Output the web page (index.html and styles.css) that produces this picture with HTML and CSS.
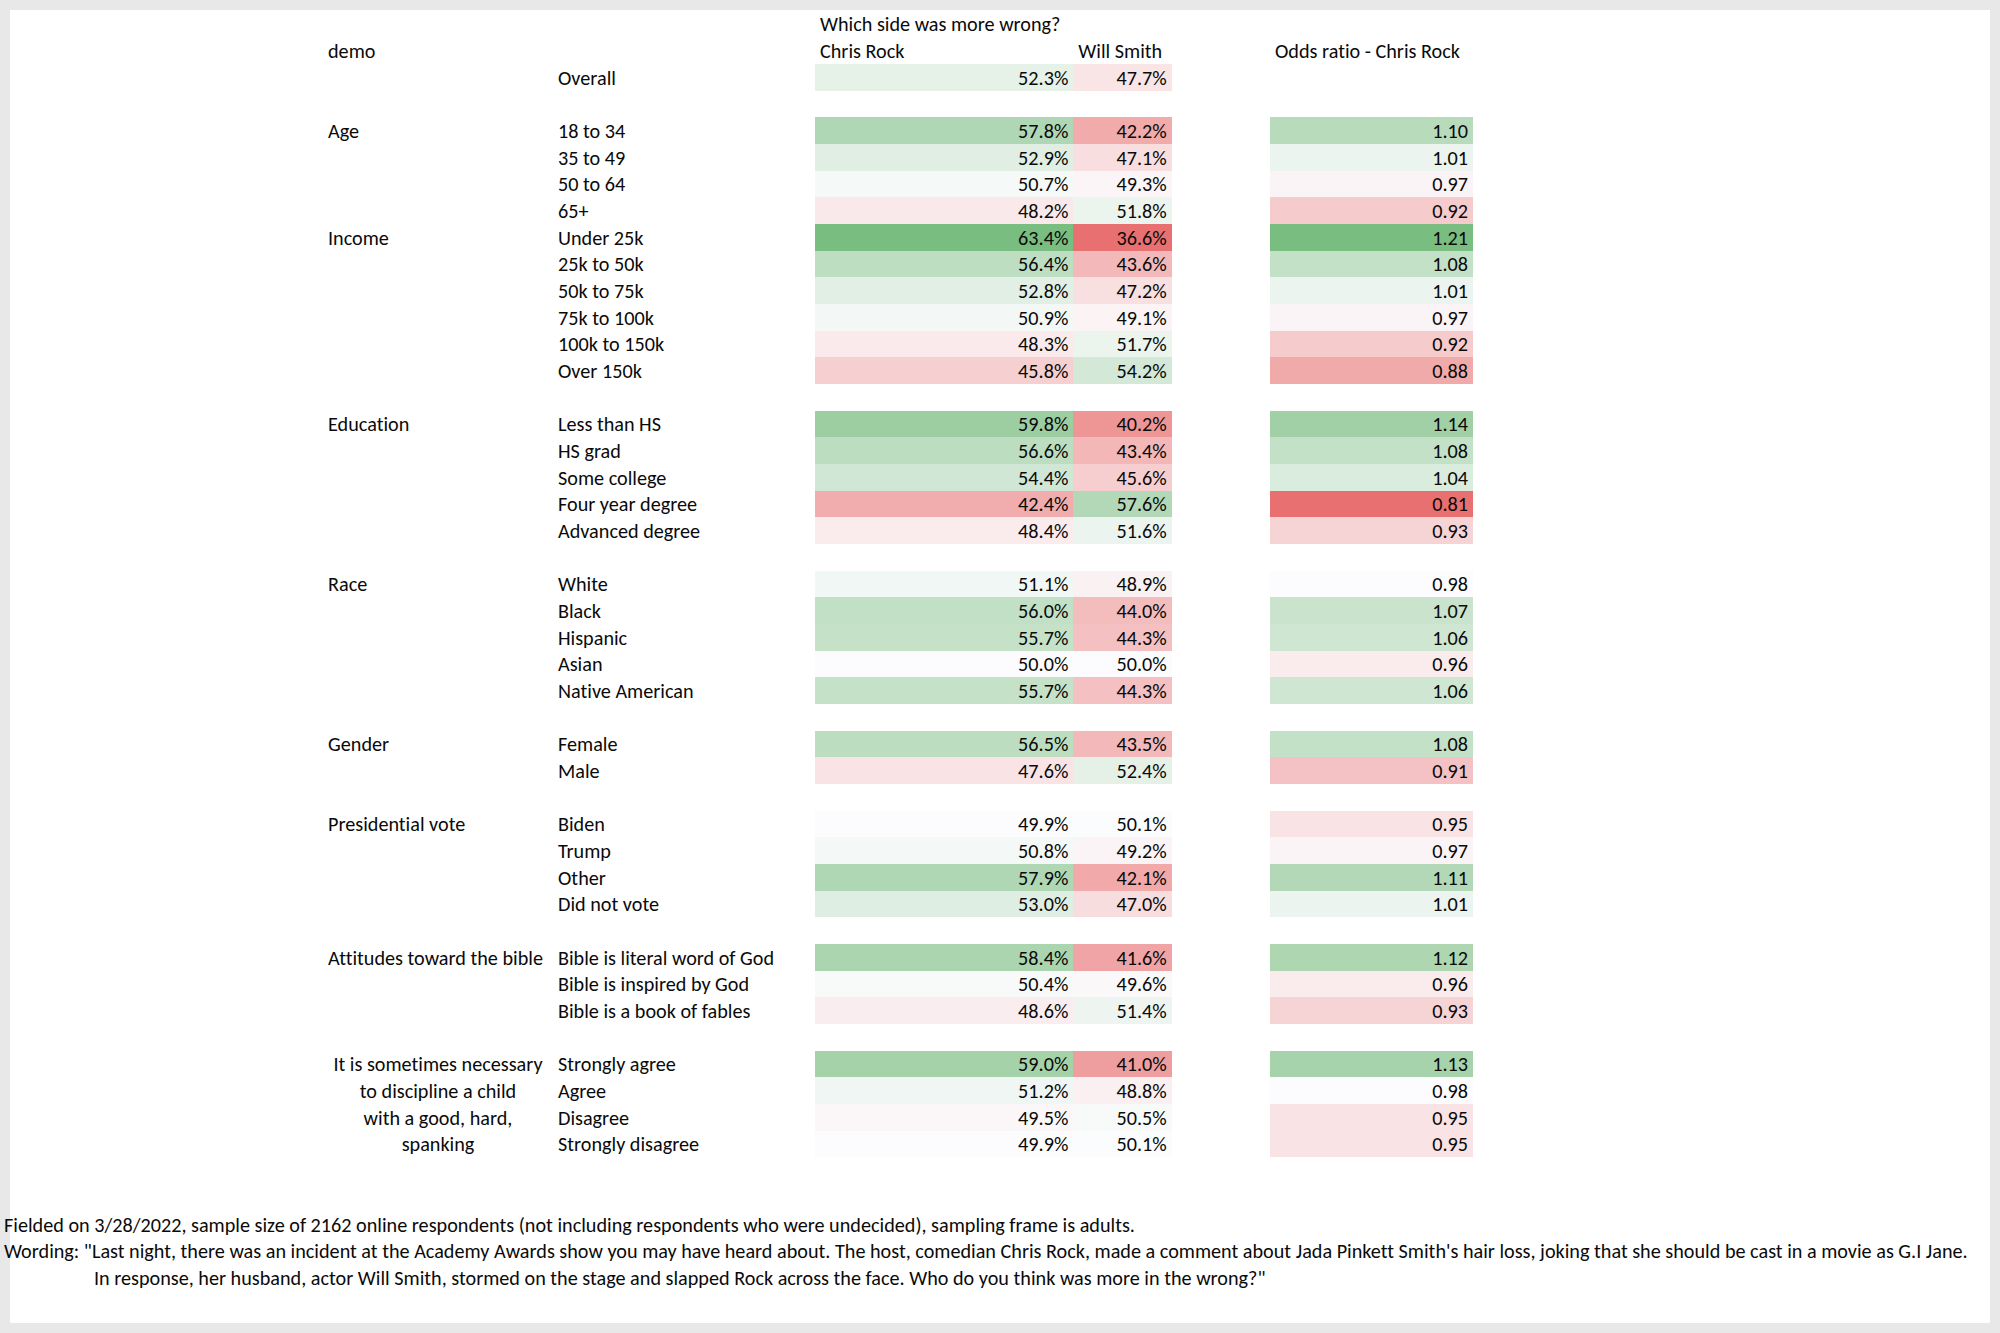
FILE: index.html
```html
<!DOCTYPE html>
<html lang="en">
<head>
<meta charset="utf-8">
<title>Which side was more wrong?</title>
<link rel="stylesheet" href="styles.css">
</head>
<body>
<div class="sheet">
  <table class="grid">
    <colgroup>
      <col class="c-a"><col class="c-b"><col class="c-c"><col class="c-d"><col class="c-e"><col class="c-f"><col class="c-g">
    </colgroup>
    <tr><td></td><td></td><td></td><td class="ov">Which side was more wrong?</td><td></td><td></td><td></td></tr>
    <tr><td></td><td>demo</td><td></td><td>Chris Rock</td><td>Will Smith</td><td></td><td>Odds ratio - Chris Rock</td></tr>
    <tr><td></td><td></td><td>Overall</td><td class="p">52.3%</td><td class="p">47.7%</td><td></td><td></td></tr>
    <tr class="blank"><td colspan="7"></td></tr>
    <tr><td></td><td>Age</td><td>18 to 34</td><td class="p">57.8%</td><td class="p">42.2%</td><td></td><td class="o">1.10</td></tr>
    <tr><td></td><td></td><td>35 to 49</td><td class="p">52.9%</td><td class="p">47.1%</td><td></td><td class="o">1.01</td></tr>
    <tr><td></td><td></td><td>50 to 64</td><td class="p">50.7%</td><td class="p">49.3%</td><td></td><td class="o">0.97</td></tr>
    <tr><td></td><td></td><td>65+</td><td class="p">48.2%</td><td class="p">51.8%</td><td></td><td class="o">0.92</td></tr>
    <tr><td></td><td>Income</td><td>Under 25k</td><td class="p">63.4%</td><td class="p">36.6%</td><td></td><td class="o">1.21</td></tr>
    <tr><td></td><td></td><td>25k to 50k</td><td class="p">56.4%</td><td class="p">43.6%</td><td></td><td class="o">1.08</td></tr>
    <tr><td></td><td></td><td>50k to 75k</td><td class="p">52.8%</td><td class="p">47.2%</td><td></td><td class="o">1.01</td></tr>
    <tr><td></td><td></td><td>75k to 100k</td><td class="p">50.9%</td><td class="p">49.1%</td><td></td><td class="o">0.97</td></tr>
    <tr><td></td><td></td><td>100k to 150k</td><td class="p">48.3%</td><td class="p">51.7%</td><td></td><td class="o">0.92</td></tr>
    <tr><td></td><td></td><td>Over 150k</td><td class="p">45.8%</td><td class="p">54.2%</td><td></td><td class="o">0.88</td></tr>
    <tr class="blank"><td colspan="7"></td></tr>
    <tr><td></td><td>Education</td><td>Less than HS</td><td class="p">59.8%</td><td class="p">40.2%</td><td></td><td class="o">1.14</td></tr>
    <tr><td></td><td></td><td>HS grad</td><td class="p">56.6%</td><td class="p">43.4%</td><td></td><td class="o">1.08</td></tr>
    <tr><td></td><td></td><td>Some college</td><td class="p">54.4%</td><td class="p">45.6%</td><td></td><td class="o">1.04</td></tr>
    <tr><td></td><td></td><td>Four year degree</td><td class="p">42.4%</td><td class="p">57.6%</td><td></td><td class="o">0.81</td></tr>
    <tr><td></td><td></td><td>Advanced degree</td><td class="p">48.4%</td><td class="p">51.6%</td><td></td><td class="o">0.93</td></tr>
    <tr class="blank"><td colspan="7"></td></tr>
    <tr><td></td><td>Race</td><td>White</td><td class="p">51.1%</td><td class="p">48.9%</td><td></td><td class="o">0.98</td></tr>
    <tr><td></td><td></td><td>Black</td><td class="p">56.0%</td><td class="p">44.0%</td><td></td><td class="o">1.07</td></tr>
    <tr><td></td><td></td><td>Hispanic</td><td class="p">55.7%</td><td class="p">44.3%</td><td></td><td class="o">1.06</td></tr>
    <tr><td></td><td></td><td>Asian</td><td class="p">50.0%</td><td class="p">50.0%</td><td></td><td class="o">0.96</td></tr>
    <tr><td></td><td></td><td>Native American</td><td class="p">55.7%</td><td class="p">44.3%</td><td></td><td class="o">1.06</td></tr>
    <tr class="blank"><td colspan="7"></td></tr>
    <tr><td></td><td>Gender</td><td>Female</td><td class="p">56.5%</td><td class="p">43.5%</td><td></td><td class="o">1.08</td></tr>
    <tr><td></td><td></td><td>Male</td><td class="p">47.6%</td><td class="p">52.4%</td><td></td><td class="o">0.91</td></tr>
    <tr class="blank"><td colspan="7"></td></tr>
    <tr><td></td><td>Presidential vote</td><td>Biden</td><td class="p">49.9%</td><td class="p">50.1%</td><td></td><td class="o">0.95</td></tr>
    <tr><td></td><td></td><td>Trump</td><td class="p">50.8%</td><td class="p">49.2%</td><td></td><td class="o">0.97</td></tr>
    <tr><td></td><td></td><td>Other</td><td class="p">57.9%</td><td class="p">42.1%</td><td></td><td class="o">1.11</td></tr>
    <tr><td></td><td></td><td>Did not vote</td><td class="p">53.0%</td><td class="p">47.0%</td><td></td><td class="o">1.01</td></tr>
    <tr class="blank"><td colspan="7"></td></tr>
    <tr><td></td><td>Attitudes toward the bible</td><td>Bible is literal word of God</td><td class="p">58.4%</td><td class="p">41.6%</td><td></td><td class="o">1.12</td></tr>
    <tr><td></td><td></td><td>Bible is inspired by God</td><td class="p">50.4%</td><td class="p">49.6%</td><td></td><td class="o">0.96</td></tr>
    <tr><td></td><td></td><td>Bible is a book of fables</td><td class="p">48.6%</td><td class="p">51.4%</td><td></td><td class="o">0.93</td></tr>
    <tr class="blank"><td colspan="7"></td></tr>
    <tr><td></td><td class="ctr">It is sometimes necessary</td><td>Strongly agree</td><td class="p">59.0%</td><td class="p">41.0%</td><td></td><td class="o">1.13</td></tr>
    <tr><td></td><td class="ctr">to discipline a child</td><td>Agree</td><td class="p">51.2%</td><td class="p">48.8%</td><td></td><td class="o">0.98</td></tr>
    <tr><td></td><td class="ctr">with a good, hard,</td><td>Disagree</td><td class="p">49.5%</td><td class="p">50.5%</td><td></td><td class="o">0.95</td></tr>
    <tr><td></td><td class="ctr">spanking</td><td>Strongly disagree</td><td class="p">49.9%</td><td class="p">50.1%</td><td></td><td class="o">0.95</td></tr>
  </table>
  <div class="notes">
    <div class="line">Fielded on 3/28/2022, sample size of 2162 online respondents (not including respondents who were undecided), sampling frame is adults.</div>
    <div class="line">Wording: "Last night, there was an incident at the Academy Awards show you may have heard about. The host, comedian Chris Rock, made a comment about Jada Pinkett Smith's hair loss, joking that she should be cast in a movie as G.I Jane.</div>
    <div class="line indent">In response, her husband, actor Will Smith, stormed on the stage and slapped Rock across the face. Who do you think was more in the wrong?"</div>
  </div>
</div>
<script src="script.js"></script>
</body>
</html>
```

FILE: styles.css
```css
html, body {
  margin: 0;
  padding: 0;
}
body {
  background: #e8e8e8;
  font-family: "Carlito", "Calibri", "Lato", "Liberation Sans", sans-serif;
  font-size: 20.2px;
  font-variant-ligatures: none;
  color: #0a0a0a;
}
.sheet {
  margin: 10px 0 0 10px;
  width: 1980px;
  height: 1313px;
  background: #ffffff;
  padding-top: 0.67px;
  box-sizing: border-box;
}
.grid {
  border-collapse: collapse;
  border-spacing: 0;
  table-layout: fixed;
  width: 1463px;
}
.c-a { width: 313px; }
.c-b { width: 230px; }
.c-c { width: 262px; }
.c-d { width: 258.33px; }
.c-e { width: 98.34px; }
.c-f { width: 98.33px; }
.c-g { width: 203px; }
.grid tr { height: 26.667px; }
.grid td {
  height: 26.667px;
  padding: 1.5px 5px 0 5px;
  line-height: 25.167px;
  white-space: nowrap;
  overflow: visible;
  vertical-align: middle;
  text-align: left;
  box-sizing: border-box;
}
.grid td.p, .grid td.o {
  text-align: right;
  padding-right: 5px;
}
.grid td.ctr {
  text-align: center;
}
.notes {
  margin-top: 53.333px;
  margin-left: -6px;
  line-height: 26.667px;
  white-space: nowrap;
}
.notes .line {
  padding-top: 1px;
  height: 25.667px;
}
.notes .indent {
  padding-left: 90px;
}
```

FILE: script.js
```js
(function () {
  var WHITE = [252, 252, 254];
  var GREEN = [122, 189, 128];
  var RED = [233, 112, 112];
  function mix(a, b, t) {
    return 'rgb(' + [0, 1, 2].map(function (i) {
      return Math.round(a[i] + (b[i] - a[i]) * t);
    }).join(',') + ')';
  }
  var cells = document.querySelectorAll('td.p, td.o');
  for (var k = 0; k < cells.length; k++) {
    var td = cells[k];
    var v = parseFloat(td.textContent);
    var isPct = td.classList.contains('p');
    var mid = isPct ? 50 : 0.98;
    var hi = isPct ? 63.4 : 1.21;
    var lo = isPct ? 36.6 : 0.81;
    var col;
    if (v >= mid) {
      col = mix(WHITE, GREEN, Math.min(1, (v - mid) / (hi - mid)));
    } else {
      col = mix(WHITE, RED, Math.min(1, (mid - v) / (mid - lo)));
    }
    td.style.backgroundColor = col;
  }
})();
```
